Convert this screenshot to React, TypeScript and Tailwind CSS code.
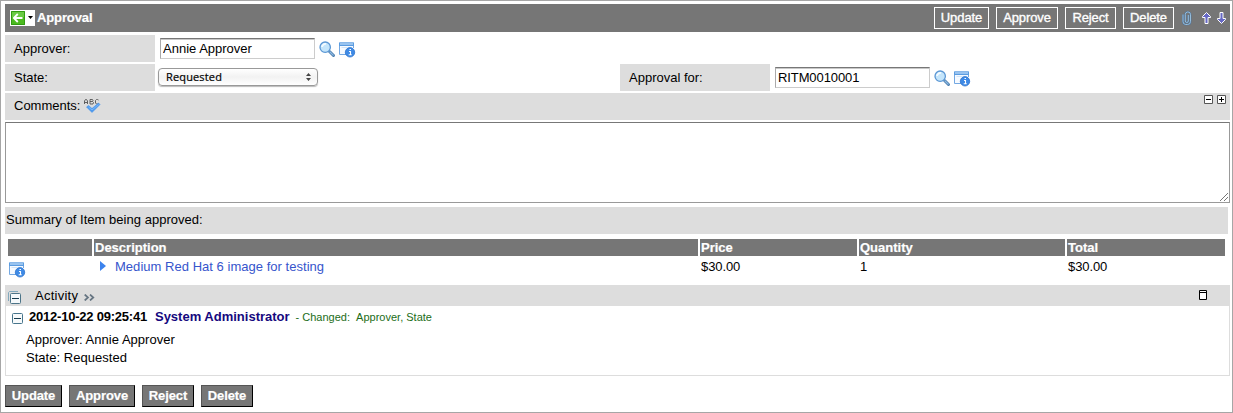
import React from "react";

function SearchIcon() {
  return (
    <svg width="17" height="17" viewBox="0 0 17 17" className="block shrink-0">
      <path d="M10.500 10.500l4 4" stroke="#4d7fb0" strokeWidth="3" strokeLinecap="round" />
      <path d="M11 11l3.200 3.200" stroke="#8fbbe3" strokeWidth="1.200" strokeLinecap="round" />
      <circle cx="6.200" cy="6.200" r="5.200" fill="#c4e5fb" stroke="#5b97d4" strokeWidth="1.300" />
      <path d="M3 6a3.500 3.500 0 0 1 4-3" stroke="#f4fbff" strokeWidth="1.800" fill="none" />
    </svg>
  );
}

function InfoIcon() {
  return (
    <svg width="17" height="16" viewBox="0 0 17 16" className="block shrink-0">
      <path d="M.5 1h14v11.500H.5z" fill="#f6faff" stroke="#74a8e2" />
      <path d="M0 .5h15v3.500H0z" fill="#5b9ce0" />
      <path d="M1 2h13" stroke="#d6eaff" />
      <path d="M2.500 5.500h6" stroke="#d2e5f8" />
      <path d="M10 6h6v8h-6z" fill="#fff" />
      <circle cx="11" cy="10.300" r="4.700" fill="#3e8ae6" stroke="#2f74cc" strokeWidth=".8" />
      <path d="M10 9.500h1.500v3.300M9.700 12.700h3M10.500 7.500h1.500" stroke="#fff" strokeWidth="1.100" fill="none" />
    </svg>
  );
}

function BackIcon() {
  return (
    <svg width="25" height="16" viewBox="0 0 25 16" className="block shrink-0">
      <path d="M0 0h25v16H0z" fill="#fff" />
      <path d="M1 1h14v14H1z" fill="#4cba20" />
      <path d="M1 1h14v6H1z" fill="#6acb43" />
      <path d="M1.500 1.500h13v13h-13z" fill="none" stroke="#319b12" />
      <path d="M12.500 8H4M7.800 4L3.800 8l4 4" stroke="#fff" strokeWidth="1.800" fill="none" />
      <path d="M18 6h5l-2.500 3z" fill="#000" />
    </svg>
  );
}

function ClipIcon() {
  return (
    <svg width="10" height="15" viewBox="0 0 10 15" className="block shrink-0">
      <path d="M1 3.500v7a3 3 0 0 0 2.500 3h2A3 3 0 0 0 8.500 10.500V3.500A2.500 2.500 0 0 0 6 1H5.500A2.500 2.500 0 0 0 3.300 3.500V10a1.500 1.500 0 0 0 3 0V4" fill="none" stroke="#4a719a" strokeWidth="1.700" />
      <path d="M1 3.500v7a3 3 0 0 0 2.500 3h2A3 3 0 0 0 8.500 10.500V3.500A2.500 2.500 0 0 0 6 1H5.500A2.500 2.500 0 0 0 3.300 3.500V10a1.500 1.500 0 0 0 3 0V4" fill="none" stroke="#a9d0ec" strokeWidth=".8" />
    </svg>
  );
}

function ArrowIcon({ down = false }: { down?: boolean }) {
  return (
    <svg width="9" height="12" viewBox="0 0 9 12" className="block shrink-0">
      <path
        d={down ? "M3 .5h3v6h2.500v1L4.500 11.500.5 7.500v-1H3z" : "M3 11.500h3v-6h2.500v-1L4.500.5.5 4.500v1H3z"}
        fill="#6668c4"
        stroke="#fff"
      />
    </svg>
  );
}

function SpellIcon() {
  return (
    <svg width="17" height="15" viewBox="0 0 17 15" className="block shrink-0">
      <path
        d="M.5 5V2l1-1.500h1l1 1.500v3M.5 3.500h3M6 .5v4.500M6 .5h2.500l.5 1-.5 1H6M8.500 2.500l1 1-.5 1.500H6M14.500 1l-1-.5h-1l-1 1v2.500l1 1h1l1-.5"
        fill="none"
        stroke="#555"
        strokeWidth=".9"
      />
      <path d="M2.500 8l2-1.500L8 9.500 14.500 4l1.500 1.500-8 8z" fill="#4b98ee" stroke="#4b95ea" strokeWidth=".6" />
      <path d="M4.500 8l3.500 3 6.500-5.500" fill="none" stroke="#7dbafa" />
    </svg>
  );
}

function MinusBox({ stacked = false }: { stacked?: boolean }) {
  return stacked ? (
    <svg width="13" height="13" viewBox="0 0 13 13" className="block shrink-0">
      <path d="M.5 10V1.500l1-1H10" fill="none" stroke="#82a9bd" />
      <rect x="2.500" y="2.500" width="10" height="10" rx="1" fill="#f4f8fa" stroke="#4c7488" />
      <path d="M4 7.500h7" stroke="#183c50" />
    </svg>
  ) : (
    <svg width="11" height="11" viewBox="0 0 11 11" className="block shrink-0">
      <rect x=".5" y=".5" width="10" height="10" rx="1" fill="#f7fafb" stroke="#47758c" />
      <path d="M2 5.500h7" stroke="#183c50" />
    </svg>
  );
}

function SizeBox({ plus = false }: { plus?: boolean }) {
  return (
    <svg width="9" height="9" viewBox="0 0 9 9" className="block">
      <path d="M.5.5h8v8h-8z" fill="#fff" stroke="#555" />
      <path d={plus ? "M2 4.500h5M4.500 2v5" : "M2 4.500h5"} stroke="#000" />
    </svg>
  );
}

function ReferenceField({ value, tracking = "tracking-normal" }: { value: string; tracking?: string }) {
  return (
    <div className="flex items-start pt-[3px]">
      <input
        defaultValue={value}
        className={`${tracking} block h-[21px] w-[155px] border border-[#ccc] border-t-[#777] border-l-[#aaa] bg-white px-[2px] text-[13px] shadow-[inset_0_1px_0_#c8c8c8] outline-none`}
      />
      <div className="mt-[3px] ml-1"><SearchIcon /></div>
      <div className="mt-1 ml-[3px]"><InfoIcon /></div>
    </div>
  );
}

function Label({ children }: { children: React.ReactNode }) {
  return <div className="h-[27px] w-[150px] shrink-0 bg-[#ddd] pl-[9px] leading-[27px]">{children}</div>;
}

const topButtons = [
  { label: "Update", size: "w-[55px]" },
  { label: "Approve", size: "w-[62px]" },
  { label: "Reject", size: "w-[51px]" },
  { label: "Delete", size: "w-[51px]" },
];

const bottomButtons = [
  { label: "Update", size: "w-[57px]" },
  { label: "Approve", size: "w-[66px]" },
  { label: "Reject", size: "w-[52px]" },
  { label: "Delete", size: "w-[52px]" },
];

export default function App() {
  return (
    <div className="h-[413px] w-[1233px] overflow-hidden border border-[#a6a6a6] bg-white pt-[3px] pl-1 font-['Liberation_Sans',Arial,sans-serif] text-[13px] text-black">
      <header className="flex h-7 w-[1225px] items-start bg-[#767676] pl-[5px] text-white">
        <div className="mt-[6px]"><BackIcon /></div>
        <h1 className="ml-[2px] text-[13px] leading-[27px] font-bold tracking-[-0.12px] [-webkit-text-stroke:0.2px_white]">Approval</h1>
        <div className="mt-[3px] ml-auto flex gap-[7px]">
          {topButtons.map((b) => (
            <button key={b.label} className={`${b.size} h-[22px] border border-white text-center leading-5 tracking-[-0.1px] [-webkit-text-stroke:0.35px_white]`}>
              {b.label}
            </button>
          ))}
        </div>
        <div className="mt-[7px] ml-2"><ClipIcon /></div>
        <div className="mt-2 ml-[10px]"><ArrowIcon /></div>
        <div className="mt-2 mr-1 ml-[6px]"><ArrowIcon down /></div>
      </header>

      <div className="mt-[3px] flex h-[27px]">
        <Label>Approver:</Label>
        <div className="ml-[5px]"><ReferenceField value="Annie Approver" /></div>
      </div>

      <div className="mt-[2px] flex h-[27px]">
        <Label>State:</Label>
        <button className="mt-[4px] ml-[3px] flex h-[18px] w-[160px] items-center justify-between rounded-[4px] border border-[#999] bg-linear-to-b from-white via-[#f2f2f2] to-white pr-[6px] pl-[7px] font-['Open_Sans',sans-serif] text-[11px] leading-4 tracking-[0.15px] shadow-[0_1px_1px_#bbb] [-webkit-text-stroke:0.2px_black]">
          Requested
          <svg width="5" height="8" viewBox="0 0 5 8"><path d="M0 3l2.500-3L5 3zM0 5h5L2.500 8z" fill="#444" /></svg>
        </button>
        <div className="ml-[302px]"><Label>Approval for:</Label></div>
        <div className="ml-[5px]"><ReferenceField value="RITM0010001" tracking="tracking-[-0.1px]" /></div>
      </div>

      <div className="mt-[2px] flex h-[27px] w-[1225px] items-start bg-[#ddd] pr-1 pl-[9px]">
        <span className="leading-[26px]">Comments:</span>
        <div className="mt-[6px] ml-[4px]"><SpellIcon /></div>
        <div className="mt-[2px] ml-auto flex gap-1"><SizeBox /><SizeBox plus /></div>
      </div>

      <div className="mt-[2px] flex h-[81px] w-[1225px] items-end justify-end border border-[#999] border-t-[#777] bg-white">
        <svg width="8" height="8" viewBox="0 0 8 8" className="mr-px mb-px block">
          <path d="M0 8l8-8M4 8l4-4" stroke="#666" strokeWidth=".9" />
        </svg>
      </div>

      <div className="mt-1 h-[27px] w-[1223px] bg-[#ddd] pl-px leading-[25px] tracking-[0.03px]">
        Summary of Item being approved:
      </div>

      <div className="mt-[5px] ml-[3px] grid w-[1217px] grid-cols-[84px_604px_157px_206px_158px] gap-x-[2px]">
        <div className="h-[17px] bg-[#767676]" />
        {["Description", "Price", "Quantity", "Total"].map((h) => (
          <div key={h} className="h-[17px] bg-[#767676] pl-px leading-[17px] font-bold text-white [-webkit-text-stroke:0.2px_white]">{h}</div>
        ))}
        <div className="pt-[6px] pl-px"><InfoIcon /></div>
        <div className="flex h-[29px] items-start pl-[6px] leading-[21px]">
          <svg width="6" height="10" viewBox="0 0 6 10" className="mt-[5px] mr-[9px]"><path d="M0 0l6 5-6 5z" fill="#3c83ed" /></svg>
          <a className="tracking-[0.03px] text-[#3655cc]">Medium Red Hat 6 image for testing</a>
        </div>
        <div className="pl-px leading-[21px] tracking-[-0.1px]">$30.00</div>
        <div className="pl-px leading-[21px]">1</div>
        <div className="pl-px leading-[21px] tracking-[-0.1px]">$30.00</div>
      </div>

      <section className="h-[91px] w-[1225px] border border-t-0 border-[#ddd]">
        <div className="flex h-[21px] items-start bg-[#ddd] pl-[2px]">
          <div className="mt-[6px]"><MinusBox stacked /></div>
          <span className="ml-[14px] leading-[21px] tracking-[0.25px]">Activity</span>
          <svg width="11" height="7" viewBox="0 0 11 7" className="mt-[9px] ml-[6px]">
            <path d="M.7.500l3.300 3L.7 6.500M6 .500l3.300 3L6 6.500" fill="none" stroke="#667582" strokeWidth="1.700" />
          </svg>
          <svg width="8" height="10" viewBox="0 0 8 10" className="mt-[5px] mr-[22px] ml-auto">
            <path d="M.5.5h7v9h-7zM1 2.500h6" fill="#fff" stroke="#000" />
          </svg>
        </div>
        <div className="flex h-[22px] items-start pl-[6px] leading-[22px]">
          <div className="mt-[7px]"><MinusBox /></div>
          <b className="ml-[6px] tracking-[-0.22px]">2012-10-22 09:25:41</b>
          <b className="ml-[8px] text-[#15087e]">System Administrator</b>
          <span className="ml-[6px] text-[11px] leading-[23px] text-[#226d18]">- Changed: &nbsp;Approver, State</span>
        </div>
        <div className="mt-[3px] pl-5 leading-[18px] tracking-[0.03px]">
          <p>Approver: Annie Approver</p>
          <p>State: Requested</p>
        </div>
      </section>

      <footer className="mt-[9px] flex gap-[7px]">
        {bottomButtons.map((b) => (
          <button key={b.label} className={`${b.size} h-[22px] border border-[#555] border-r-black border-b-black bg-[#767676] text-center leading-5 font-bold tracking-[-0.1px] text-white [-webkit-text-stroke:0.2px_white]`}>
            {b.label}
          </button>
        ))}
      </footer>
    </div>
  );
}
